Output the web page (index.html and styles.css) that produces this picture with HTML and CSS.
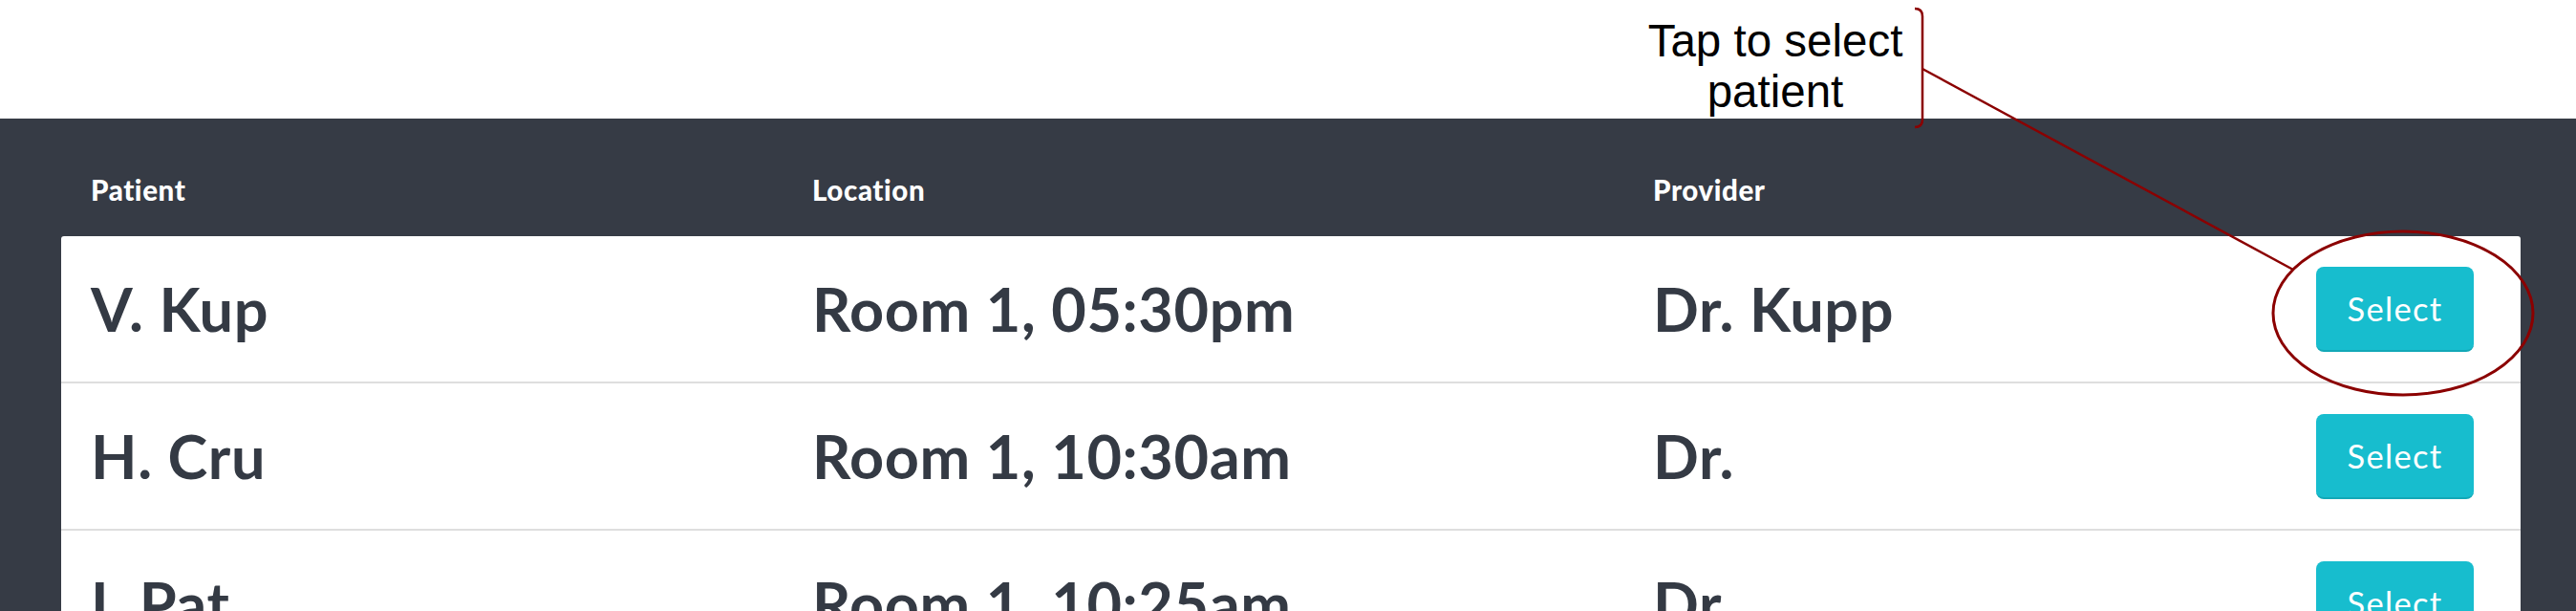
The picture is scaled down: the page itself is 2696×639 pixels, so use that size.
FILE: index.html
```html
<!DOCTYPE html>
<html>
<head>
<meta charset="utf-8">
<link rel="stylesheet" href="styles.css">
</head>
<body>
<div class="page">
  <div class="top"></div>
  <section class="board">
    <div class="head">
      <div>Patient</div>
      <div>Location</div>
      <div>Provider</div>
      <div></div>
    </div>
    <div class="card">
      <div class="row">
        <div>V. Kup</div>
        <div>Room 1, 05:30pm</div>
        <div>Dr. Kupp</div>
        <button class="btn">Select</button>
      </div>
      <div class="row">
        <div>H. Cru</div>
        <div>Room 1, 10:30am</div>
        <div>Dr.</div>
        <button class="btn">Select</button>
      </div>
      <div class="row">
        <div>I. Pat</div>
        <div>Room 1, 10:25am</div>
        <div>Dr.</div>
        <button class="btn">Select</button>
      </div>
    </div>
  </section>
  <div class="note">Tap to select<br>patient</div>
  <svg class="marks" width="2696" height="639" viewBox="0 0 2696 639">
    <path d="M2004 9 Q2012 9 2012 17 L2012 125 Q2012 133 2004 133" fill="none" stroke="#8b0000" stroke-width="2.5"/>
    <path d="M2012 72 L2400 282" fill="none" stroke="#8b0000" stroke-width="2.5"/>
    <ellipse cx="2515" cy="327.5" rx="136" ry="85.5" fill="none" stroke="#8b0000" stroke-width="3"/>
  </svg>
</div>
</body>
</html>
```

FILE: styles.css
```css
html, body {
  margin: 0;
  padding: 0;
  background: #ffffff;
}
.page {
  position: relative;
  width: 2696px;
  height: 639px;
  overflow: hidden;
  font-family: Lato, "Noto Sans", sans-serif;
}
.top {
  height: 124px;
  background: #ffffff;
}
.board {
  background: #363b45;
  height: 515px;
  padding: 0 58px 0 64px;
}
.head {
  display: grid;
  grid-template-columns: 755px 880px 1fr 165px;
  height: 123px;
  box-sizing: border-box;
  padding: 26px 49px 0 31px;
  align-items: center;
  color: #ffffff;
  font-weight: 900;
  font-size: 29.5px;
  letter-spacing: 0.6px;
  line-height: 1.2;
}
.card {
  background: #ffffff;
  border-radius: 3px 3px 0 0;
}
.row {
  display: grid;
  grid-template-columns: 755px 880px 1fr 165px;
  align-items: center;
  height: 152px;
  padding: 0 49px 0 31px;
  border-bottom: 2px solid #dedede;
  color: #343a44;
  font-weight: 700;
  font-size: 63px;
  letter-spacing: 0.6px;
  line-height: 1.2;
}
.btn {
  width: 165px;
  height: 89px;
  border: none;
  border-bottom: 2px solid #12a8b7;
  border-radius: 8px;
  background: #17bdce;
  color: #ffffff;
  font-family: Lato, "Noto Sans", sans-serif;
  font-size: 34.5px;
  letter-spacing: 1.3px;
  font-weight: 400;
  padding: 0;
}
.note {
  position: absolute;
  left: 1658px;
  top: 16px;
  width: 400px;
  text-align: center;
  font-family: "Liberation Sans", Arial, sans-serif;
  font-size: 47.5px;
  line-height: 53px;
  color: #000000;
}
.marks {
  position: absolute;
  left: 0;
  top: 0;
  pointer-events: none;
}
```
